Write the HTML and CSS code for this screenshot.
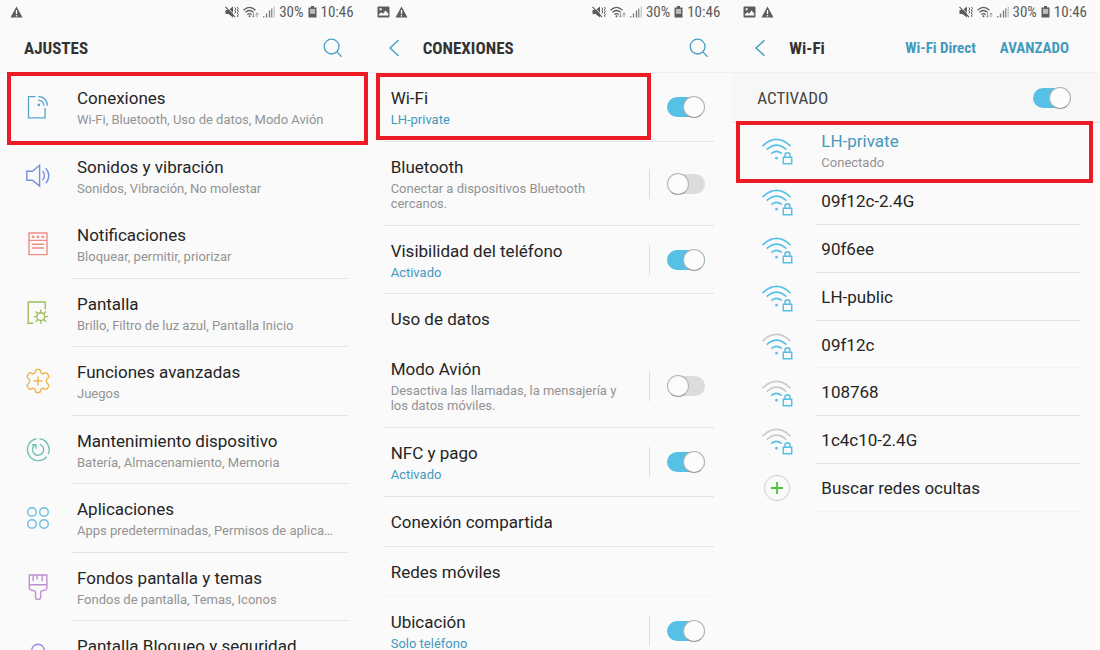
FILE: index.html
```html
<!DOCTYPE html>
<html lang="es">
<head>
<meta charset="utf-8">
<meta name="viewport" content="width=device-width, initial-scale=1">
<title>Ajustes</title>
<link rel="stylesheet" href="styles.css">
</head>
<body>
<svg class="sprite" aria-hidden="true">
  <symbol id="warn" viewBox="0 0 13 12"><path d="M6.5 0.5 12.5 11.5H0.5z" fill="#5c5c5c"/><path d="M6.5 4v4M6.5 9v1.4" stroke="#fafafa" stroke-width="1.3"/></symbol>
  <symbol id="photo" viewBox="0 0 13 12"><path fill="#5c5c5c" fill-rule="evenodd" d="M1.5 0.5h10q1 0 1 1v9q0 1-1 1h-10q-1 0-1-1v-9q0-1 1-1zM1.8 9.400h9.400V7.400L8.600 4.600 6 7.800 4.200 6.200 1.800 8.400zM2.600 2.200v2h2v-2z"/></symbol>
  <symbol id="mute" viewBox="0 0 14 12"><path d="M0.5 4h3L8 0.5v11L3.5 8h-3z" fill="#5c5c5c"/><path d="M1.500 0.500 10.500 10" stroke="#fafafa" stroke-width="1"/><path d="M0.5 0.8 10 11.2" stroke="#5c5c5c" stroke-width="1.2"/><path d="M9.800 1.500l1 1.500-1 1.500 1 1.500-1 1.500M12.300 1l1 1.500-1 1.500 1 1.500-1 1.500 1 1.500-1 1.500 1 1" stroke="#5c5c5c" stroke-width="1" fill="none"/></symbol>
  <symbol id="wifi-small" viewBox="0 0 16 12"><path d="M0.5 4.2q6-5.6 12 0M2.4 6.4q4.1-3.8 8.2 0M4.3 8.6q2.2-2 4.4 0" fill="none" stroke="#5c5c5c" stroke-width="1.2"/><circle cx="6.5" cy="10.3" r="1" fill="#5c5c5c"/><path d="M10.5 6.8V11M9 9.6l1.5 1.6L12 9.6M14 11.3V7M12.5 8.5 14 6.9l1.5 1.6" fill="none" stroke="#888" stroke-width="0.8"/></symbol>
  <symbol id="signal" viewBox="0 0 12 12"><path d="M0.7 10V11.5M3.5 7.5v4M6.5 4.5v7" stroke="#777" stroke-width="1.3"/><path d="M8.8 2.5v9" stroke="#666" stroke-width="1"/><path d="M11.2 0.5v11" stroke="#c0c0c0" stroke-width="1.2"/></symbol>
  <symbol id="battery" viewBox="0 0 9 12"><path d="M3 0h3v1.4h2.5v10.1h-8V1.4H3z" fill="#5c5c5c"/><path d="M1.9 2.9h5.2v5H1.9z" fill="#bbb"/></symbol>
  <symbol id="search" viewBox="0 0 20 20"><g fill="none" stroke="#4a9fc4" stroke-width="1.3"><circle cx="8.6" cy="8.6" r="7.4"/><path d="M13.9 13.9 18.7 18.7"/></g></symbol>
  <symbol id="back" viewBox="0 0 12 18"><path d="M10.5 1.2 2 9l8.5 7.8" fill="none" stroke="#4a9fc4" stroke-width="1.5"/></symbol>
  <symbol id="wifi" viewBox="0 0 31 28"><g fill="none" stroke-width="1.7" stroke-linecap="round"><path class="arc-outer" d="M1 7.6q13.5-12.400 27 0"/><path class="arc-middle" d="M5.2 11.2q9.3-8.200 18.6 0"/><path d="M9.8 15.2q4.7-3.8 9.4 0" stroke="#56c0e5"/></g><circle cx="14.5" cy="20.2" r="1.4" fill="#56c0e5"/><path d="M20 19h11v8H20z" fill="#fafafa"/><path d="M21.3 19.3h8.4v6.4h-8.4zM23 19v-1.8q0-2.5 2.5-2.5t2.5 2.5V19" fill="none" stroke="#56c0e5" stroke-width="1.5"/></symbol>
</svg>

<main class="screens">
  <section class="screen">
    <div class="status">
      <svg class="s13"><use href="#warn"/></svg>
      <div class="status-right"><svg class="s14"><use href="#mute"/></svg><svg class="s16"><use href="#wifi-small"/></svg><svg class="s12"><use href="#signal"/></svg><span>30%</span><svg class="s9"><use href="#battery"/></svg><span>10:46</span></div>
    </div>
    <header class="bar">
      <h1>AJUSTES</h1>
      <button class="icon-button search" aria-label="Buscar"><svg class="s20"><use href="#search"/></svg></button>
    </header>
    <ul class="list settings">
      <li class="plain highlight mark-settings"><a href="#conexiones">
        <svg class="icon" viewBox="0 0 26 26"><g fill="none" stroke="#55a5cf" stroke-width="1.3"><path d="M10.5 2.6H3.5v21.3h16.6V14"/><path d="M13.2 2.6q8.8 0 9 9.2M13.2 6.2q5.3 0.2 5.6 5.6"/></g><circle cx="13.8" cy="10.9" r="1.3" fill="#55a5cf"/></svg>
        <span class="text"><span class="title">Conexiones</span><span class="sub">Wi-Fi, Bluetooth, Uso de datos, Modo Avión</span></span></a></li>
      <li class="plain"><a href="#sonidos">
        <svg class="icon" viewBox="0 0 26 26"><path d="M1.8 8.2h5.6L14.6 2.2V23L7.4 17.2H1.8zM17.6 8q3.6 4.7 0 9.2M20.8 5.2q6 7.5 0 15" fill="none" stroke="#7590de" stroke-width="1.4"/></svg>
        <span class="text"><span class="title">Sonidos y vibración</span><span class="sub">Sonidos, Vibración, No molestar</span></span></a></li>
      <li><a href="#notificaciones">
        <svg class="icon" viewBox="0 0 26 26"><path d="M4 2h18v21.6H4zM4 9.4h18M7 13.2h12M7 17h12" fill="none" stroke="#f28b82" stroke-width="1.4"/><g fill="#f28b82"><circle cx="8.2" cy="5.8" r="1.4"/><circle cx="13" cy="5.8" r="1.4"/><circle cx="17.8" cy="5.8" r="1.4"/></g></svg>
        <span class="text"><span class="title">Notificaciones</span><span class="sub">Bloquear, permitir, priorizar</span></span></a></li>
      <li><a href="#pantalla">
        <svg class="icon" viewBox="0 0 26 26"><g fill="none" stroke="#9dbd5b" stroke-width="1.4"><path d="M8.3 23.2H3.2V2h17v7.2"/><circle cx="15.8" cy="16.6" r="3.9"/><path d="M15.8 9.4v3.3M15.8 20.5v3.3M8.6 16.6h3.3M19.7 16.6H23M10.7 11.5l2.3 2.3M18.6 19.4l2.3 2.3M20.9 11.5l-2.3 2.3M13 19.4l-2.3 2.3"/></g></svg>
        <span class="text"><span class="title">Pantalla</span><span class="sub">Brillo, Filtro de luz azul, Pantalla Inicio</span></span></a></li>
      <li><a href="#funciones">
        <svg class="icon" viewBox="0 0 26 26"><path d="M10.500 3Q10.500 1.500 12 1.500h2Q15.500 1.500 15.500 3q0 1.800 1.600 2.500 1.500.6 2.800-.4 1.500-1 2.300.3l1.400 2.300q.7 1.300-.6 2.200-1.600.9-1.600 3.100t1.600 3.100q1.300.9.6 2.200l-1.400 2.300q-.8 1.300-2.300.3-1.300-1-2.800-.4-1.600.7-1.600 2.500 0 1.500-1.500 1.500h-2q-1.500 0-1.500-1.500 0-1.800-1.600-2.500-1.500-.6-2.800.4-1.500 1-2.300-.3l-1.400-2.300q-.7-1.300.6-2.200 1.600-.9 1.600-3.100T3 9.900q-1.300-.9-.6-2.200l1.400-2.300q.8-1.300 2.300-.3 1.300 1 2.800.4 1.600-.7 1.600-2.500zM13 8.600v9M8.500 13h9" fill="none" stroke="#eeb650" stroke-width="1.4"/></svg>
        <span class="text"><span class="title">Funciones avanzadas</span><span class="sub">Juegos</span></span></a></li>
      <li><a href="#mantenimiento">
        <svg class="icon" viewBox="0 0 26 26"><g fill="none" stroke="#72c2b3" stroke-width="1.4"><path d="M14.500 1.800A11 11 0 0 1 23.200 17.200M21.800 19.800A11 11 0 1 1 11.500 1.800"/><path d="M14.800 7.300A5.600 5.600 0 1 1 9.600 8.200M6.900 7.700h4v4"/></g></svg>
        <span class="text"><span class="title">Mantenimiento dispositivo</span><span class="sub">Batería, Almacenamiento, Memoria</span></span></a></li>
      <li><a href="#aplicaciones">
        <svg class="icon" viewBox="0 0 26 26"><g fill="none" stroke="#6cbbe0" stroke-width="1.4"><circle cx="7" cy="7" r="4.300"/><circle cx="19" cy="7" r="4.300"/><circle cx="7" cy="19" r="4.300"/><circle cx="19" cy="19" r="4.300"/></g></svg>
        <span class="text"><span class="title">Aplicaciones</span><span class="sub">Apps predeterminadas, Permisos de aplica…</span></span></a></li>
      <li><a href="#fondos">
        <svg class="icon" viewBox="0 0 26 26"><path d="M4.300 1h17.600v13.200q0 1.800-5.200 2.600-1 .3-1 1.700v4.500q0 2.500-2.600 2.500t-2.600-2.500v-4.500q0-1.400-1-1.700-5.200-.8-5.200-2.600zM4.300 10.800h17.600M8.200 1v6.200M12 1v4.600M17.200 1v6.200" fill="none" stroke="#c18fd0" stroke-width="1.400"/></svg>
        <span class="text"><span class="title">Fondos pantalla y temas</span><span class="sub">Fondos de pantalla, Temas, Iconos</span></span></a></li>
      <li><a href="#bloqueo">
        <svg class="icon" viewBox="0 0 26 26"><path d="M6.800 12V8.500a6.200 6.200 0 0 1 12.400 0V12M3.500 12h19v12h-19z" fill="none" stroke="#9a8ee0" stroke-width="1.400"/></svg>
        <span class="text"><span class="title">Pantalla Bloqueo y seguridad</span></span></a></li>
    </ul>
  </section>

  <section class="screen">
    <div class="status">
      <div class="status-left"><svg class="s13"><use href="#photo"/></svg><svg class="s13"><use href="#warn"/></svg></div>
      <div class="status-right"><svg class="s14"><use href="#mute"/></svg><svg class="s16"><use href="#wifi-small"/></svg><svg class="s12"><use href="#signal"/></svg><span>30%</span><svg class="s9"><use href="#battery"/></svg><span>10:46</span></div>
    </div>
    <header class="bar">
      <button class="icon-button back" aria-label="Atrás"><svg class="s-back"><use href="#back"/></svg></button>
      <h1>CONEXIONES</h1>
      <button class="icon-button search" aria-label="Buscar"><svg class="s20"><use href="#search"/></svg></button>
    </header>
    <ul class="list connections">
      <li class="highlight mark-wifi"><label class="text" for="wifi-on"><span class="title">Wi-Fi</span><span class="sub accent">LH-private</span></label><span class="control no-rule"><input class="switch" type="checkbox" id="wifi-on" checked></span></li>
      <li><label class="text" for="bt"><span class="title">Bluetooth</span><span class="sub">Conectar a dispositivos Bluetooth cercanos.</span></label><span class="control"><input class="switch" type="checkbox" id="bt"></span></li>
      <li class="snug"><label class="text" for="vis"><span class="title">Visibilidad del teléfono</span><span class="sub accent">Activado</span></label><span class="control"><input class="switch" type="checkbox" id="vis" checked></span></li>
      <li class="single plain"><a class="text" href="#datos"><span class="title">Uso de datos</span></a></li>
      <li><label class="text" for="avion"><span class="title">Modo Avión</span><span class="sub">Desactiva las llamadas, la mensajería y los datos móviles.</span></label><span class="control"><input class="switch" type="checkbox" id="avion"></span></li>
      <li><label class="text" for="nfc"><span class="title">NFC y pago</span><span class="sub accent">Activado</span></label><span class="control"><input class="switch" type="checkbox" id="nfc" checked></span></li>
      <li class="single"><a class="text" href="#compartida"><span class="title">Conexión compartida</span></a></li>
      <li class="single faint"><a class="text" href="#moviles"><span class="title">Redes móviles</span></a></li>
      <li><label class="text" for="ubi"><span class="title">Ubicación</span><span class="sub accent">Solo teléfono</span></label><span class="control"><input class="switch" type="checkbox" id="ubi" checked></span></li>
    </ul>
  </section>

  <section class="screen">
    <div class="status">
      <div class="status-left"><svg class="s13"><use href="#photo"/></svg><svg class="s13"><use href="#warn"/></svg></div>
      <div class="status-right"><svg class="s14"><use href="#mute"/></svg><svg class="s16"><use href="#wifi-small"/></svg><svg class="s12"><use href="#signal"/></svg><span>30%</span><svg class="s9"><use href="#battery"/></svg><span>10:46</span></div>
    </div>
    <header class="bar">
      <button class="icon-button back" aria-label="Atrás"><svg class="s-back"><use href="#back"/></svg></button>
      <h1>Wi-Fi</h1>
      <nav class="actions"><button>Wi-Fi Direct</button><button>AVANZADO</button></nav>
    </header>
    <div class="master"><label for="master">ACTIVADO</label><input class="switch" type="checkbox" id="master" checked></div>
    <ul class="list networks">
      <li class="plain connected highlight mark-network"><a href="#lh-private"><svg class="wifi full"><use href="#wifi"/></svg><span class="text"><span class="title accent">LH-private</span><span class="sub">Conectado</span></span></a></li>
      <li><a href="#n1"><svg class="wifi full"><use href="#wifi"/></svg><span class="text title">09f12c-2.4G</span></a></li>
      <li><a href="#n2"><svg class="wifi full"><use href="#wifi"/></svg><span class="text title">90f6ee</span></a></li>
      <li><a href="#n3"><svg class="wifi full"><use href="#wifi"/></svg><span class="text title">LH-public</span></a></li>
      <li class="faint snug"><a href="#n4"><svg class="wifi medium"><use href="#wifi"/></svg><span class="text title">09f12c</span></a></li>
      <li><a href="#n5"><svg class="wifi low"><use href="#wifi"/></svg><span class="text title">108768</span></a></li>
      <li><a href="#n6"><svg class="wifi low"><use href="#wifi"/></svg><span class="text title">1c4c10-2.4G</span></a></li>
      <li class="faint"><a href="#ocultas"><svg class="add" viewBox="0 0 28 28"><circle cx="14" cy="14" r="12.600" fill="none" stroke="#cfcfcf"/><path d="M14 8v12M8 14h12" stroke="#4cc13c" stroke-width="1.800"/></svg><span class="text title">Buscar redes ocultas</span></a></li>
    </ul>
  </section>
</main>
</body>
</html>
```
FILE: styles.css
```css
*, *::before, *::after { box-sizing: border-box; }

body {
  margin: 0;
  height: 100vh;
  overflow: hidden;
  background: #fafafa;
  color: #252525;
  font-family: Roboto, "Liberation Sans", sans-serif;
}

.sprite { position: absolute; width: 0; height: 0; }
svg { display: block; flex: none; }
a { color: inherit; text-decoration: none; }
button { padding: 0; border: 0; background: none; font: inherit; color: inherit; }

.screens {
  display: grid;
  grid-template-columns: repeat(3, minmax(0, 1fr));
  height: 100vh;
  overflow: hidden;
}

.status {
  display: flex;
  align-items: center;
  justify-content: space-between;
  height: 24px;
  padding: 0 13px 0 10px;
  color: #5c5c5c;
  font-family: "Roboto Condensed", Roboto, sans-serif;
  font-size: 15px;
}
.status-left { display: flex; gap: 5px; }
.status-right { display: flex; align-items: center; gap: 4px; }
.s9 { width: 9px; height: 12px; }
.s12 { width: 12px; height: 12px; }
.s13 { width: 13px; height: 12px; }
.s14 { width: 14px; height: 12px; }
.s16 { width: 16px; height: 12px; }
.s20 { width: 20px; height: 20px; }
.s-back { width: 12px; height: 18px; }

.bar {
  display: flex;
  align-items: center;
  height: 49px;
  padding: 0 24px;
  border-bottom: 1px solid #f0f0f0;
}
.bar h1 {
  margin: 0;
  font-family: "Roboto Condensed", Roboto, sans-serif;
  font-size: 17px;
  font-weight: 700;
  color: #333;
}
.icon-button.search { margin-left: auto; }
.icon-button.back { margin: 0 23px 0 -3px; }
.actions {
  display: flex;
  gap: 24px;
  margin-left: auto;
  padding-right: 7px;
  color: #4399bd;
  font-family: "Roboto Condensed", Roboto, sans-serif;
  font-size: 15px;
  font-weight: 700;
}

.list { margin: 0; padding: 0; list-style: none; }
.list li { position: relative; }
.title { display: block; font-size: 17px; line-height: 24px; }
.sub { display: block; font-size: 13px; line-height: 15px; color: #939393; }
.title + .sub { margin-top: 2px; }
.accent { color: #4399bd; }

.settings { padding: 0 19px 0 25px; }
.settings a { display: flex; height: 69px; }
.settings li:nth-child(even) a { height: 68px; }
.settings .icon { width: 26px; height: 26px; margin: 21px 20px 0 0; }
.settings .text {
  flex: 1;
  min-width: 0;
  padding: 13px 9px 0 6px;
  border-bottom: 1px solid #e4e4e4;
}
.settings .sub { overflow: hidden; text-overflow: ellipsis; white-space: nowrap; }

.connections { padding: 0 19px 0 17px; }
.connections li {
  display: flex;
  align-items: center;
  border-bottom: 1px solid #e4e4e4;
}
.connections .text { flex: 1; padding: 13px 24px 14px 7px; }
.connections .snug .text { padding-bottom: 13px; }
.connections .single .text { padding-bottom: 12px; }
.control {
  display: flex;
  align-items: center;
  height: 30px;
  padding: 0 9px 0 17px;
  border-left: 1px solid #dcdcdc;
}
.no-rule { border-color: transparent; }

.switch {
  appearance: none;
  position: relative;
  flex: none;
  width: 38px;
  height: 20px;
  margin: 0;
  border-radius: 10px;
  background: #dcdcdc;
}
.switch::before {
  content: "";
  position: absolute;
  top: -1px;
  left: 0;
  width: 22px;
  height: 22px;
  border: 1px solid #b4b4b4;
  border-bottom-color: #999;
  border-radius: 50%;
  background: #fcfcfc;
}
.switch:checked { background: #56c0e5; }
.switch:checked::before { left: 16px; }

.master {
  display: flex;
  align-items: center;
  justify-content: space-between;
  height: 50px;
  padding: 0 29px 0 24px;
  border-bottom: 1px solid #e0e0e0;
  background: #f7f7f7;
  color: #444;
  font-family: "Roboto Condensed", Roboto, sans-serif;
  font-size: 17px;
}

.networks { padding: 0 20px 0 29px; }
.networks a { display: flex; height: 48px; }
.networks .snug a { height: 47px; }
.networks .text {
  flex: 1;
  padding: 12px 0 0 6px;
  border-bottom: 1px solid #e4e4e4;
}
.networks .connected a { height: 54px; }
.networks .connected .text { padding-top: 6px; }
.wifi { width: 31px; height: 28px; margin: 12px 22px 0 0; }
.connected .wifi { margin-top: 15px; }
.add { width: 28px; height: 28px; margin: 10px 24px 0 1px; }
.wifi { --outer: #56c0e5; --middle: #56c0e5; }
.medium { --outer: #c9c9c9; }
.low { --outer: #c9c9c9; --middle: #c9c9c9; }
.arc-outer { stroke: var(--outer); }
.arc-middle { stroke: var(--middle); }

.list .plain, .list .plain .text { border-color: transparent; }
.list .faint, .list .faint .text { border-color: #f2f2f2; }

/* Red callouts drawn over the rows */
.highlight::after {
  content: "";
  position: absolute;
  border: 4px solid #ed1c24;
  pointer-events: none;
  z-index: 1;
}
.mark-settings::after { inset: -1px -20px -3px -18px; }
.mark-wifi::after { inset: 0 63px 1px -8px; }
.mark-network::after { inset: -2px -13px -6px -26px; }
```
